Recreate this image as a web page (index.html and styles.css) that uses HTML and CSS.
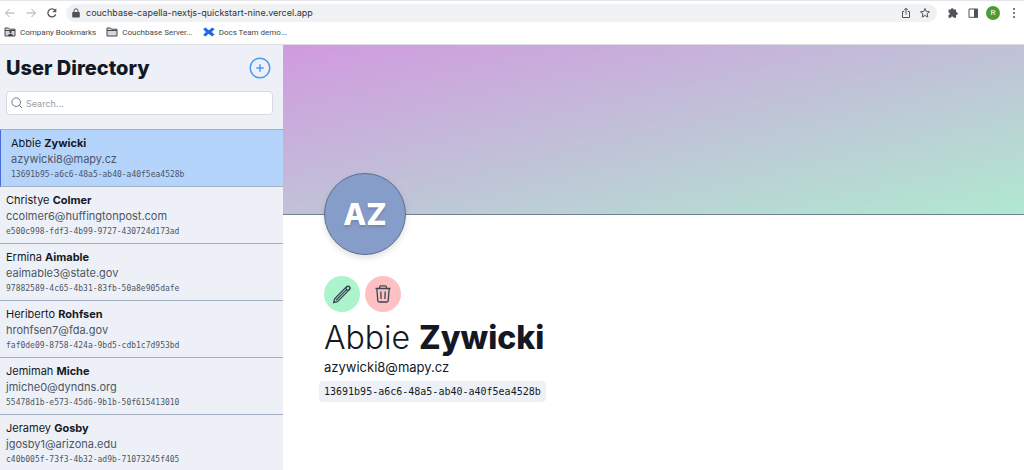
FILE: index.html
```html
<!DOCTYPE html>
<html lang="en">
<head>
    <meta charset="UTF-8">
    <meta name="viewport" content="width=device-width, initial-scale=1.0">
    <title>User Directory</title>
    <link rel="stylesheet" href="styles.css">
</head>
<body>
    <header class="browser">
        <div class="toolbar">
            <button class="nav-btn muted" aria-label="Back"><svg width="12" height="12" viewBox="0 0 12 12"><path d="M10.500 6H2M5.500 2L1.500 6l4 4"/></svg></button>
            <button class="nav-btn muted" aria-label="Forward"><svg width="12" height="12" viewBox="0 0 12 12"><path d="M1.500 6H10M6.500 2l4 4-4 4"/></svg></button>
            <button class="nav-btn" aria-label="Reload"><svg width="12" height="12" viewBox="0 0 12 12"><path d="M9.700 7.200A4 4 0 1 1 9 3.400" stroke-width="1.300"/><path class="solid" d="M10.300 1.200v4H6.300z"/></svg></button>
            <div class="address">
                <svg width="8" height="10" viewBox="0 0 8 10"><path class="solid" d="M1 4h6a.8.8 0 0 1 .8.8v4a.8.8 0 0 1-.8.8H1a.8.800 0 0 1-.8-.8v-4A.8.8 0 0 1 1 4z"/><path d="M2 4.500V2.800a2 2 0 0 1 4 0v1.700"/></svg>
                <input class="url" type="text" aria-label="Address" value="couchbase-capella-nextjs-quickstart-nine.vercel.app">
                <button class="nav-btn" aria-label="Share"><svg width="10" height="12" viewBox="0 0 10 12"><path d="M3.200 4.500H1.500v6h7v-6H6.800M5 7.500V1.500M3 3.200l2-2 2 2"/></svg></button>
                <button class="nav-btn" aria-label="Bookmark"><svg width="12" height="12" viewBox="0 0 12 12"><path d="M6 1.500l1.300 3 3.200.3-2.400 2.100.7 3.200L6 8.500l-2.800 1.600.7-3.200-2.400-2.100 3.200-.3z"/></svg></button>
            </div>
            <div class="tools">
                <button class="nav-btn" aria-label="Extensions"><svg width="12" height="12" viewBox="0 0 12 12"><path class="solid" d="M1.500 2.600h2.300a1.400 1.400 0 0 1 2.800 0h2.500v2.600h.3a1.400 1.400 0 0 1 0 2.800h-.3v2.700H6.500a1.300 1.300 0 0 0-2.600 0H1.500V8.100a1.300 1.300 0 0 0 0-2.600z"/></svg></button>
                <button class="nav-btn" aria-label="Side panel"><svg width="12" height="12" viewBox="0 0 12 12"><path d="M2 2h8.500v8.300H2z"/><path class="solid" d="M7 2h4v8.500H7z"/></svg></button>
                <button class="profile">R</button>
                <button class="nav-btn" aria-label="Menu"><svg width="12" height="12" viewBox="0 0 12 12"><circle class="solid" cx="6" cy="2" r="1"/><circle class="solid" cx="6" cy="6" r="1"/><circle class="solid" cx="6" cy="10" r="1"/></svg></button>
            </div>
        </div>
        <nav class="bookmarks">
            <a href="#"><svg width="12" height="10" viewBox="0 0 12 10"><path class="folder" d="M1 1h3.500l1 1.200H11V9H1z"/><path d="M1 3.500h10"/><circle class="solid" cx="6.500" cy="5" r="1.200"/><path class="solid" d="M4 9c0-3 5-3 5 0z"/></svg>Company Bookmarks</a>
            <a href="#"><svg width="12" height="10" viewBox="0 0 12 10"><path class="folder" d="M1 1h3.500l1 1.200H11V9H1z"/><path d="M1 3.500h10"/></svg>Couchbase Server...</a>
            <a href="#"><svg width="12" height="10" viewBox="0 0 12 10"><path class="confluence" d="M1.500 1.300C3.500 5 7 4.800 10.300 8.500"/><path class="confluence" d="M1.500 8.700C4 4.800 8 5.200 10.300 1.300"/></svg>Docs Team demo...</a>
        </nav>
    </header>
    <main class="app">
        <aside class="sidebar">
            <div class="sidebar-top">
                <div class="title-row">
                    <h1>User Directory</h1>
                    <button class="add-btn" aria-label="Add user"><svg width="22" height="22" viewBox="0 0 22 22"><circle cx="11" cy="11" r="9.800"/><path d="M11 7.300v7.400M7.300 11h7.400"/></svg></button>
                </div>
                <label class="search">
                    <svg width="12" height="12" viewBox="0 0 12 12"><circle cx="5.200" cy="5.200" r="4.300"/><path d="M8.200 8.200l3 3"/></svg>
                    <input type="text" placeholder="Search..." aria-label="Search">
                </label>
            </div>
            <ul class="users">
                <li class="user active"><a href="#"><span class="name">Abbie <b>Zywicki</b></span><span class="email">azywicki8@mapy.cz</span><code>13691b95-a6c6-48a5-ab40-a40f5ea4528b</code></a></li>
                <li class="user"><a href="#"><span class="name">Christye <b>Colmer</b></span><span class="email">ccolmer6@huffingtonpost.com</span><code>e500c998-fdf3-4b99-9727-430724d173ad</code></a></li>
                <li class="user"><a href="#"><span class="name">Ermina <b>Aimable</b></span><span class="email">eaimable3@state.gov</span><code>97882589-4c65-4b31-83fb-50a8e905dafe</code></a></li>
                <li class="user"><a href="#"><span class="name">Heriberto <b>Rohfsen</b></span><span class="email">hrohfsen7@fda.gov</span><code>faf0de09-8758-424a-9bd5-cdb1c7d953bd</code></a></li>
                <li class="user"><a href="#"><span class="name">Jemimah <b>Miche</b></span><span class="email">jmiche0@dyndns.org</span><code>55478d1b-e573-45d6-9b1b-50f615413010</code></a></li>
                <li class="user"><a href="#"><span class="name">Jeramey <b>Gosby</b></span><span class="email">jgosby1@arizona.edu</span><code>c40b005f-73f3-4b32-ad9b-71073245f405</code></a></li>
            </ul>
        </aside>
        <section class="detail">
            <div class="banner"></div>
            <div class="profile-info">
                <div class="avatar">AZ</div>
                <div class="actions">
                    <button class="edit" aria-label="Edit user"><svg width="20" height="20" viewBox="0 0 20 20"><path d="M1.700 18.500l.9-3.700L14.800 2.600a2 2 0 0 1 2.800 2.800L5.400 17.600zM4 16.200L14.300 5.900"/><circle cx="16" cy="4.200" r="1.900"/></svg></button>
                    <button class="delete" aria-label="Delete user"><svg width="20" height="20" viewBox="0 0 20 20"><path d="M2.500 4.500h15M3.800 4.500l1 12.300a1.300 1.300 0 0 0 1.300 1.200h7.800a1.300 1.300 0 0 0 1.300-1.200l1-12.300M6.600 4.300V3A1.200 1.200 0 0 1 7.800 1.800h4.400A1.200 1.200 0 0 1 13.400 3v1.300M7.800 7.500l.3 7.500M12.200 7.500l-.3 7.500"/></svg></button>
                </div>
                <h2>Abbie <b>Zywicki</b></h2>
                <p>azywicki8@mapy.cz</p>
                <code>13691b95-a6c6-48a5-ab40-a40f5ea4528b</code>
            </div>
        </section>
    </main>
</body>
</html>
```
FILE: styles.css
```css
* {
    box-sizing: border-box;
}
body {
    display: flex;
    flex-direction: column;
    height: 100vh;
    margin: 0;
    overflow: hidden;
    background-color: #fff;
    color: #141824;
    font-family: Inter, "Liberation Sans", sans-serif;
}
button {
    display: flex;
    align-items: center;
    justify-content: center;
    padding: 0;
    border: none;
    background: none;
    cursor: pointer;
}
input {
    min-width: 0;
    padding: 0;
    border: none;
    outline: none;
    background: none;
}
a {
    color: inherit;
    text-decoration: none;
}
svg {
    flex: none;
    fill: none;
    stroke: currentColor;
}
code {
    font-family: "DejaVu Sans Mono", monospace;
}

/* browser bar */
.browser {
    flex: none;
    border-top: 1px solid #e4e5e8;
    border-bottom: 1px solid #dcdde0;
    color: #50545a;
}
.browser .solid {
    fill: currentColor;
    stroke: none;
}
.toolbar {
    display: flex;
    align-items: center;
    gap: 8px;
    height: 23px;
    padding: 0 4px 0 3px;
}
.nav-btn {
    width: 13px;
    height: 16px;
    color: inherit;
}
.muted {
    color: #a7a9ac;
}
.address {
    display: flex;
    flex: 1;
    align-items: center;
    gap: 6px;
    height: 18px;
    padding: 0 6px;
    border-radius: 9px;
    background-color: #f0f1f3;
}
.url {
    flex: 1;
    color: #303338;
    font-family: Inter, sans-serif;
    font-size: 9px;
}
.tools {
    display: flex;
    align-items: center;
    gap: 7px;
    padding-left: 1px;
}
.profile {
    width: 14px;
    height: 14px;
    border-radius: 50%;
    background-color: #4f9a34;
    color: #fff;
    font-family: Roboto, sans-serif;
    font-size: 8px;
}
.bookmarks {
    display: flex;
    gap: 10px;
    height: 20px;
    padding: 0 4px 4px;
    color: #44484d;
    font-family: Roboto, sans-serif;
    font-size: 8px;
}
.bookmarks a {
    display: flex;
    align-items: center;
    gap: 4px;
}
.folder {
    fill: #d5d7da;
}
.confluence {
    stroke: #2067e8;
    stroke-width: 3;
}

.app {
    display: flex;
    flex: 1;
    min-height: 0;
}
.sidebar {
    flex: none;
    width: 283px;
    overflow: hidden;
    background-color: #edf1f7;
}
.sidebar-top {
    padding: 12px 10px 14px 6px;
}
.title-row {
    display: flex;
    align-items: center;
    justify-content: space-between;
    padding-right: 2px;
}
h1 {
    margin: 0;
    font-size: 20px;
    font-weight: 800;
    line-height: 22px;
}
.add-btn {
    color: #4b98f7;
}
.add-btn svg {
    stroke-width: 1.5;
}
.search {
    display: flex;
    align-items: center;
    gap: 3px;
    height: 24px;
    margin-top: 12px;
    padding: 0 4px;
    border: 1px solid #d5d9e0;
    border-radius: 4px;
    background-color: #fff;
    color: #717a89;
}
.search input {
    flex: 1;
    font-family: Inter, sans-serif;
    font-size: 9px;
}
.search input::placeholder {
    color: #969dab;
}
.users {
    margin: 0;
    padding: 0;
    border-top: 1px solid #a3b0c2;
    list-style: none;
}
.user a {
    display: flex;
    flex-direction: column;
    padding: 5px 6px 3px;
    border-bottom: 1px solid #a3b0c2;
    font-size: 11px;
    line-height: 16px;
}
.user.active a {
    padding-left: 10px;
    border-left: 1px solid #4c6ade;
    background-color: #b4d4fc;
}
.user .email {
    color: #4c5665;
}
.user code {
    color: #4c5665;
    font-size: 8px;
}

.detail {
    flex: 1;
    min-width: 0;
}
.banner {
    height: 170px;
    border-bottom: 1px solid #718096;
    background: linear-gradient(to bottom right, #d19adf, #b0e9d0);
}
.profile-info {
    display: flex;
    flex-direction: column;
    align-items: flex-start;
    margin-top: -42px;
    padding: 0 41px;
}
.avatar {
    display: flex;
    align-items: center;
    justify-content: center;
    width: 82px;
    height: 82px;
    border: 1px solid #5d6f8c;
    border-radius: 50%;
    background-color: #869dc9;
    box-shadow: 0 3px 6px rgba(0, 0, 0, 0.12);
    color: #fff;
    font-size: 30px;
    font-weight: 800;
    text-shadow: 0 2px 3px rgba(0, 0, 0, 0.15);
}
.actions {
    display: flex;
    gap: 5px;
    margin-top: 21px;
}
.actions button {
    width: 36px;
    height: 36px;
    border-radius: 50%;
    color: #3c4656;
}
.actions svg {
    stroke-width: 1.3;
}
.edit {
    background-color: #acf4cb;
}
.delete {
    background-color: #fec1c3;
}
h2 {
    margin: 8px 0 0;
    font-size: 32px;
    font-weight: 300;
    line-height: 36px;
}
h2 b {
    font-weight: 800;
}
.profile-info p {
    margin: 3px 0 0;
    font-size: 13px;
    line-height: 16px;
}
.profile-info code {
    margin: 6px 0 0 -5px;
    padding: 0 5px;
    border-radius: 4px;
    background-color: #edf1f7;
    font-size: 10px;
    line-height: 21px;
}
```
